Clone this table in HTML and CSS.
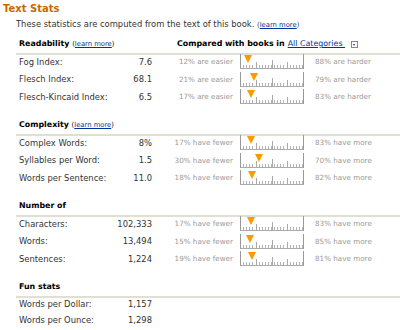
FILE: index.html
```html
<!DOCTYPE html>
<html>
<head>
<meta charset="utf-8">
<link rel="stylesheet" href="styles.css">
</head>
<body>
<div class="stats">
  <h2 class="title">Text Stats</h2>
  <p class="intro">These statistics are computed from the text of this book. <span class="small">(<a href="#">learn more</a>)</span></p>

  <section class="sec">
    <div class="sec-head">
      <div class="sec-name">Readability <span class="small">(<a href="#">learn more</a>)</span></div>
      <div class="compare">Compared with books in <a href="#" class="cat">All Categories&nbsp;</a><span class="dd"></span></div>
    </div>
    <div class="rows">
      <div class="row"><span class="lbl">Fog Index:</span><span class="val">7.6</span><span class="lo">12% are easier</span><span class="slider"><i class="mark" style="left:12%"></i></span><span class="hi">88% are harder</span></div>
      <div class="row"><span class="lbl">Flesch Index:</span><span class="val">68.1</span><span class="lo">21% are easier</span><span class="slider"><i class="mark" style="left:21%"></i></span><span class="hi">79% are harder</span></div>
      <div class="row"><span class="lbl">Flesch-Kincaid Index:</span><span class="val">6.5</span><span class="lo">17% are easier</span><span class="slider"><i class="mark" style="left:17%"></i></span><span class="hi">83% are harder</span></div>
    </div>
  </section>

  <section class="sec">
    <div class="sec-head">
      <div class="sec-name">Complexity <span class="small">(<a href="#">learn more</a>)</span></div>
    </div>
    <div class="rows">
      <div class="row"><span class="lbl">Complex Words:</span><span class="val">8%</span><span class="lo">17% have fewer</span><span class="slider"><i class="mark" style="left:17%"></i></span><span class="hi">83% have more</span></div>
      <div class="row"><span class="lbl">Syllables per Word:</span><span class="val">1.5</span><span class="lo">30% have fewer</span><span class="slider"><i class="mark" style="left:30%"></i></span><span class="hi">70% have more</span></div>
      <div class="row"><span class="lbl">Words per Sentence:</span><span class="val">11.0</span><span class="lo">18% have fewer</span><span class="slider"><i class="mark" style="left:18%"></i></span><span class="hi">82% have more</span></div>
    </div>
  </section>

  <section class="sec">
    <div class="sec-head">
      <div class="sec-name">Number of</div>
    </div>
    <div class="rows">
      <div class="row"><span class="lbl">Characters:</span><span class="val">102,333</span><span class="lo">17% have fewer</span><span class="slider"><i class="mark" style="left:17%"></i></span><span class="hi">83% have more</span></div>
      <div class="row"><span class="lbl">Words:</span><span class="val">13,494</span><span class="lo">15% have fewer</span><span class="slider"><i class="mark" style="left:15%"></i></span><span class="hi">85% have more</span></div>
      <div class="row"><span class="lbl">Sentences:</span><span class="val">1,224</span><span class="lo">19% have fewer</span><span class="slider"><i class="mark" style="left:19%"></i></span><span class="hi">81% have more</span></div>
    </div>
  </section>

  <section class="sec">
    <div class="sec-head">
      <div class="sec-name">Fun stats</div>
    </div>
    <div class="rows">
      <div class="row fun"><span class="lbl">Words per Dollar:</span><span class="val">1,157</span></div>
      <div class="row fun"><span class="lbl">Words per Ounce:</span><span class="val">1,298</span></div>
    </div>
  </section>
</div>
</body>
</html>
```

FILE: styles.css
```css
html, body {
  margin: 0;
  padding: 0;
  background: #fff;
}

.stats {
  font-family: "DejaVu Sans", Verdana, sans-serif;
  font-size: 8.4px;
  color: #333;
}

.title {
  margin: 2px 0 0 3px;
  font-size: 10px;
  line-height: 14px;
  font-weight: bold;
  color: #cc6600;
}

.intro {
  margin: 2px 0 0 16px;
  line-height: 12px;
}

.small {
  font-size: 6.8px;
}

a {
  color: #003399;
  text-decoration: underline;
}

.sec {
  margin-left: 16px;
  margin-top: 12.5px;
}

.stats > .intro + .sec {
  margin-top: 6px;
}

.sec-head {
  display: flex;
  align-items: baseline;
  padding: 0 0 1.5px 3px;
  line-height: 14px;
  border-bottom: 2px solid #e0e0d2;
}

.sec-name {
  width: 158px;
  font-weight: bold;
  font-size: 7.9px;
  color: #000;
}

.sec-name .small {
  font-weight: normal;
}

.compare {
  font-weight: bold;
  font-size: 7.9px;
  color: #000;
  display: flex;
  align-items: center;
}

.compare .cat {
  font-weight: normal;
  margin-left: 3px;
}

.dd {
  display: inline-block;
  width: 5px;
  height: 5px;
  border: 1px solid #7a86a8;
  margin-left: 6px;
  position: relative;
}

.dd::after {
  content: "";
  position: absolute;
  left: 1px;
  top: 2px;
  border-left: 1.5px solid transparent;
  border-right: 1.5px solid transparent;
  border-top: 2px solid #334;
}

.rows {
  margin-top: -1.5px;
}

.row {
  display: grid;
  grid-template-columns: 95px 38px 88px 75px 1fr;
  align-items: center;
  height: 17.5px;
  padding-left: 3px;
}

.row.fun {
  height: 16px;
}

.val {
  text-align: right;
}

.lo, .hi {
  color: #999;
  font-size: 7.2px;
  white-space: nowrap;
}

.lo {
  text-align: right;
  padding-right: 7px;
}

.slider {
  position: relative;
  width: 62px;
  height: 14px;
  border-left: 1px solid #999;
  border-right: 1px solid #999;
  border-bottom: 1px solid #aaa;
  background:
    linear-gradient(#aaa, #aaa) 25% 100% / 1px 6px no-repeat,
    linear-gradient(#aaa, #aaa) 50% 100% / 1px 8px no-repeat,
    linear-gradient(#aaa, #aaa) 75% 100% / 1px 6px no-repeat,
    repeating-linear-gradient(90deg, transparent 0 2.1px, #b4b4b4 2.1px 3.1px) 0 100% / 100% 3px no-repeat;
}

.mark {
  position: absolute;
  top: 1px;
  margin-left: -4.5px;
  width: 0;
  height: 0;
  border-left: 4.5px solid transparent;
  border-right: 4.5px solid transparent;
  border-top: 8px solid #ff9900;
}
```
